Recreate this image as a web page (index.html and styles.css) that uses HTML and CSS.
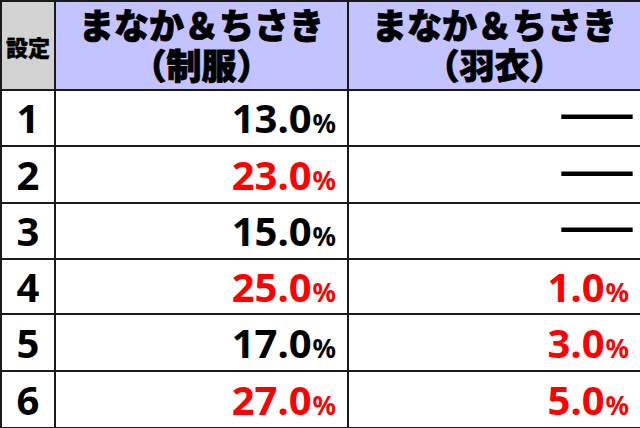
FILE: index.html
```
<!DOCTYPE html>
<html lang="ja">
<head>
<meta charset="utf-8">
<link rel="stylesheet" href="styles.css">
</head>
<body>
<table class="rates">
  <colgroup>
    <col class="c-set">
    <col class="c-val">
    <col class="c-val">
  </colgroup>
  <thead>
    <tr class="head">
      <th class="h-set">設定</th>
      <th class="h-col">まなか＆ちさき<br>（制服）</th>
      <th class="h-col">まなか＆ちさき<br>（羽衣）</th>
    </tr>
  </thead>
  <tbody>
    <tr class="r1"><td class="set">1</td><td class="val">13.0<span class="pc">%</span></td><td class="val none"><span class="dash">―</span></td></tr>
    <tr class="r2"><td class="set">2</td><td class="val red">23.0<span class="pc">%</span></td><td class="val none"><span class="dash">―</span></td></tr>
    <tr class="r3"><td class="set">3</td><td class="val">15.0<span class="pc">%</span></td><td class="val none"><span class="dash">―</span></td></tr>
    <tr class="r4"><td class="set">4</td><td class="val red">25.0<span class="pc">%</span></td><td class="val red">1.0<span class="pc">%</span></td></tr>
    <tr class="r5"><td class="set">5</td><td class="val">17.0<span class="pc">%</span></td><td class="val red">3.0<span class="pc">%</span></td></tr>
    <tr class="r6"><td class="set">6</td><td class="val red">27.0<span class="pc">%</span></td><td class="val red">5.0<span class="pc">%</span></td></tr>
  </tbody>
</table>
</body>
</html>
```
FILE: styles.css
```
html, body {
  margin: 0;
  padding: 0;
  background: #ffffff;
}

.rates {
  width: 640px;
  height: 428px;
  border-collapse: collapse;
  table-layout: fixed;
  font-family: "Noto Sans", "Noto Sans CJK JP", sans-serif;
  color: #000;
}

.c-set { width: 54px; }
.c-val { width: 293px; }

.rates th,
.rates td {
  border: 2px solid #1a1a1a;
  padding: 0;
}

.head { height: 89px; }
.r1 { height: 56px; }
.r2 { height: 57px; }
.r3 { height: 56px; }
.r4 { height: 55px; }
.r5 { height: 57px; }
.r6 { height: 57px; }

.rates .h-set {
  background: #d2d2d2;
  font-family: "Noto Sans CJK JP", sans-serif;
  font-weight: 900;
  font-size: 22px;
  line-height: 24px;
  text-align: center;
  vertical-align: middle;
  -webkit-text-stroke: 0.4px #000;
}

.rates .h-col {
  background: #c3c3ff;
  font-family: "Noto Sans CJK JP", sans-serif;
  font-weight: 900;
  font-size: 35px;
  line-height: 40px;
  text-align: center;
  vertical-align: middle;
  padding-bottom: 4px;
  -webkit-text-stroke: 0.8px #000;
}

.rates .set {
  font-weight: 700;
  font-size: 40px;
  line-height: 40px;
  text-align: center;
  vertical-align: middle;
}

.rates .val {
  font-weight: 700;
  font-size: 40px;
  line-height: 40px;
  text-align: right;
  vertical-align: middle;
  padding-right: 11px;
}

.rates .none {
  padding-right: 0;
  overflow: hidden;
}

.pc {
  font-size: 26px;
  line-height: 20px;
  margin-left: 1px;
}

.red { color: #ff0000; }

.dash {
  display: inline-block;
  font-family: "Noto Sans CJK JP", sans-serif;
  font-weight: 900;
  font-size: 84px;
  line-height: 40px;
  height: 40px;
  vertical-align: top;
  margin-right: 1px;
  transform: translateY(-6px) scaleY(1.1);
}
```
